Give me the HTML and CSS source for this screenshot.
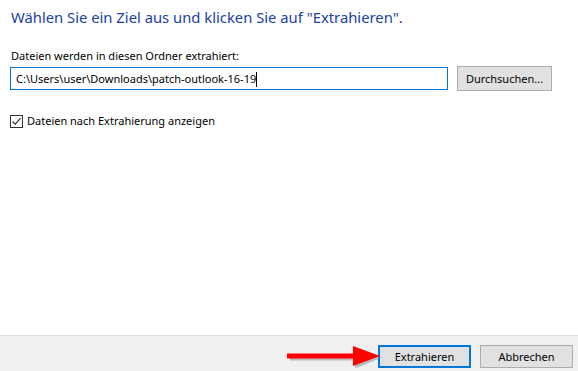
FILE: index.html
```html
<!DOCTYPE html>
<html lang="de">
<head>
  <meta charset="UTF-8">
  <title>ZIP-komprimierte Ordner extrahieren</title>
  <meta name="viewport" content="width=device-width, initial-scale=1.0">
  <link rel="stylesheet" href="styles.css">
</head>
<body>

  <div class="dialog">

    <!-- Main content -->
    <div class="content">
      <h1 class="title">Wählen Sie ein Ziel aus und klicken Sie auf "Extrahieren".</h1>

      <label class="field-label" for="target">Dateien werden in diesen Ordner extrahiert:</label>
      <div class="path-row">
        <div class="path-input" id="target">C:\Users\user\Downloads\patch-outlook-16-19<span class="caret"></span></div>
        <button class="btn browse-btn">Durchsuchen...</button>
      </div>

      <label class="check-row">
        <span class="checkbox">
          <svg width="11" height="11" viewBox="0 0 11 11">
            <path d="M1.5 5.5 L4.2 8.2 L9.6 2.2" fill="none" stroke="#333" stroke-width="1.2"/>
          </svg>
        </span>
        Dateien nach Extrahierung anzeigen
      </label>
    </div>

    <!-- Footer buttons -->
    <div class="footer">
      <button class="btn default-btn">Extrahieren</button>
      <button class="btn">Abbrechen</button>

      <!-- red annotation arrow -->
      <svg class="arrow" width="100" height="28" viewBox="0 0 100 28">
        <path d="M3 9.5 H68 V1.5 L95 11.5 L68 22.5 V14.5 H3 Z" fill="#7a7a7a" opacity="0.45"/>
        <path d="M0 7.5 H66 V0 L93 10 L66 20 V12.5 H0 Z" fill="#ff0000"/>
      </svg>
    </div>

  </div>

</body>
</html>
```

FILE: styles.css
```css
body {
  margin: 0;
  background: white;
  font-family: "Noto Sans", "Open Sans", sans-serif;
  color: #000;
}

.dialog {
  width: 578px;
  height: 371px;
  display: flex;
  flex-direction: column;
}

.content {
  flex: 1;
  padding: 0 10px;
}

.title {
  margin: 7px 0 0 1px;
  font-size: 14.8px;
  font-weight: normal;
  line-height: 21px;
  color: #1b3fa6;
}

.field-label {
  display: block;
  margin: 20px 0 0 1px;
  font-size: 11px;
  line-height: 16px;
}

.path-row {
  display: flex;
  align-items: center;
  gap: 9px;
  margin-top: 2px;
}

.path-input {
  width: 431px;
  height: 21px;
  border: 1px solid #0078d7;
  font-size: 11px;
  line-height: 21px;
  padding-left: 5px;
  box-sizing: content-box;
}

.caret {
  display: inline-block;
  width: 1px;
  height: 15px;
  background: #000;
  vertical-align: -4px;
}

.btn {
  font-family: "Noto Sans", "Open Sans", sans-serif;
  font-size: 11px;
  height: 23px;
  width: 93px;
  padding: 0;
  background: #e1e1e1;
  border: 1px solid #adadad;
  color: #000;
}

.browse-btn {
  width: 95px;
  height: 25px;
}

.check-row {
  display: flex;
  align-items: center;
  gap: 4px;
  margin-top: 22px;
  font-size: 11px;
  line-height: 16px;
}

.checkbox {
  width: 11px;
  height: 11px;
  border: 1px solid #333;
  display: flex;
}

.footer {
  position: relative;
  height: 36px;
  border-top: 1px solid #dfdfdf;
  background: #f0f0f0;
  display: flex;
  justify-content: flex-end;
  align-items: flex-start;
  gap: 9px;
  padding: 9px 5px 0 0;
  box-sizing: border-box;
}

.default-btn {
  border: 2px solid #0078d7;
}

.arrow {
  position: absolute;
  left: 287px;
  top: 10px;
}
```
